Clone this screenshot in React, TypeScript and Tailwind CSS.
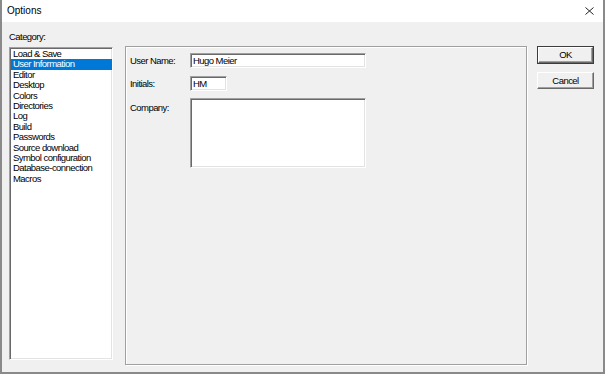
import React, { useState } from "react";

const categories = [
  "Load & Save",
  "User Information",
  "Editor",
  "Desktop",
  "Colors",
  "Directories",
  "Log",
  "Build",
  "Passwords",
  "Source download",
  "Symbol configuration",
  "Database-connection",
  "Macros",
];

const sunken =
  "border border-t-[#a0a0a0] border-l-[#a0a0a0] border-r-white border-b-white shadow-[inset_1px_1px_0_#696969,inset_-1px_-1px_0_#e3e3e3] bg-white";

const App: React.FC = () => {
  const [selected, setSelected] = useState(1);

  return (
    <div className="w-[605px] h-[374px] flex flex-col border-x-2 border-b-2 border-[#8a8a8a] text-black text-[9.5px] leading-[12px] tracking-[-0.55px] font-['Liberation_Sans',Arial,sans-serif] select-none">
      {/* title bar */}
      <div className="h-[22px] bg-white flex items-center justify-between pl-[5px] pr-[9px]">
        <span className="text-[10px] tracking-normal">Options</span>
        <svg width="9" height="8" viewBox="0 0 9 8" className="text-[#222]">
          <path d="M0.5 0.5 L8.5 7.5 M8.5 0.5 L0.5 7.5" stroke="currentColor" strokeWidth="1" fill="none" />
        </svg>
      </div>

      <div className="flex-1 bg-[#f0f0f0] flex items-start pl-[7px] pt-[9px]">
        {/* category list */}
        <div className="flex flex-col">
          <div className="h-[12px] mb-[4px]">Category:</div>
          <div className={`w-[104px] h-[313px] ${sunken} pt-[1px] pl-[1px] pr-[0px]`}>
            {categories.map((c, i) => (
              <div
                key={c}
                onClick={() => setSelected(i)}
                className={`h-[10.4px] leading-[10.4px] pl-[2px] whitespace-nowrap ${
                  i === selected ? "bg-[#0078d7] text-white" : ""
                }`}
              >
                {c}
              </div>
            ))}
          </div>
        </div>

        {/* group box */}
        <div className="ml-[12px] mt-[15px] w-[402px] h-[319px] border border-[#a0a0a0] shadow-[inset_1px_1px_0_#fff,1px_1px_0_#fff] pl-[4px] pt-[6px]">
          <div className="grid grid-cols-[60px_auto] gap-y-[8px] items-start">
            <div className="h-[15px] flex items-center">User Name:</div>
            <div className={`w-[176px] h-[15px] ${sunken} flex items-center pl-[2px]`}>Hugo Meier</div>

            <div className="h-[15px] flex items-center">Initials:</div>
            <div className={`w-[37px] h-[15px] ${sunken} flex items-center pl-[2px]`}>HM</div>

            <div className="pt-[4px] -mt-[1px]">Company:</div>
            <div className={`w-[176px] h-[70px] -mt-[1px] ${sunken}`}></div>
          </div>
        </div>

        {/* buttons */}
        <div className="ml-[10px] mt-[15px] flex flex-col gap-[8px]">
          <div className="w-[57px] h-[18px] border border-[#3c3c3c]">
            <div className="h-full border border-t-white border-l-white border-r-[#696969] border-b-[#696969] shadow-[inset_-1px_-1px_0_#a0a0a0] flex items-center justify-center">
              OK
            </div>
          </div>
          <div className="w-[57px] h-[17px] border border-t-white border-l-white border-r-[#696969] border-b-[#696969] shadow-[inset_-1px_-1px_0_#a0a0a0] flex items-center justify-center">
            Cancel
          </div>
        </div>
      </div>
    </div>
  );
};

export default App;
